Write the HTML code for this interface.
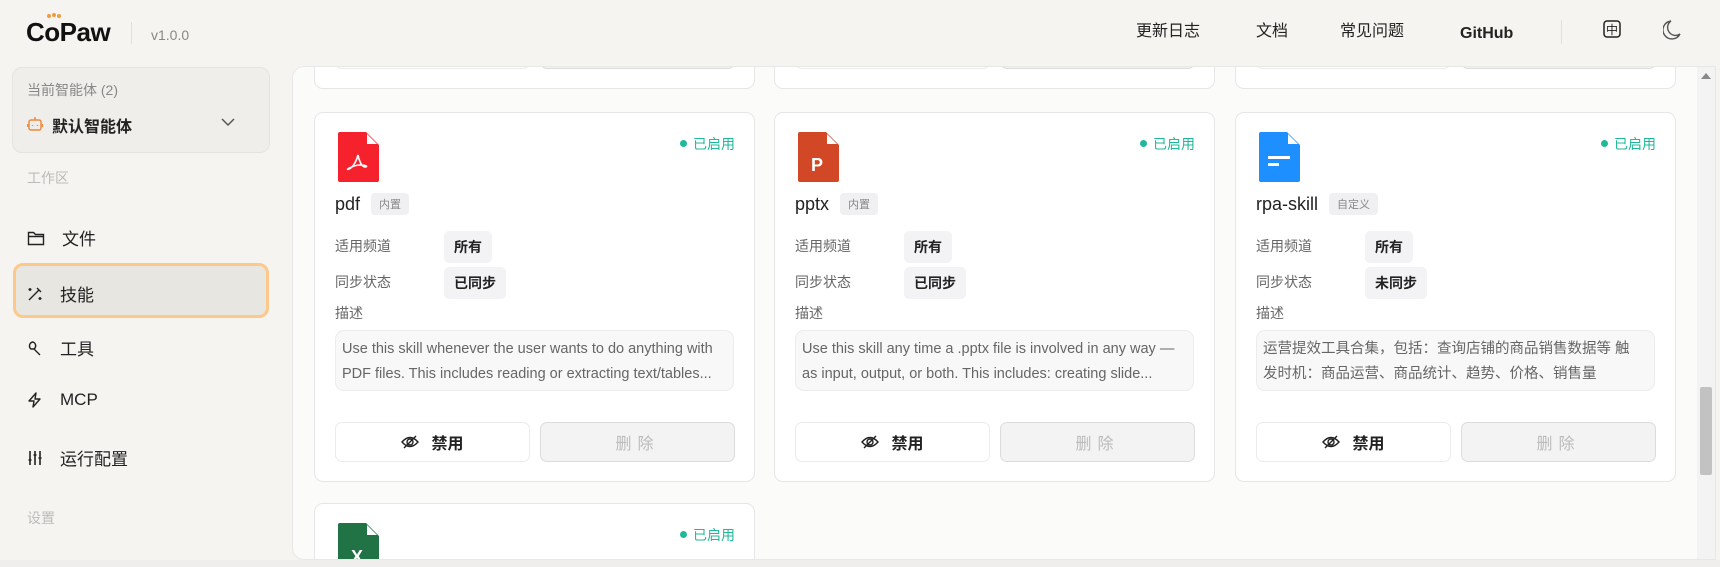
<!DOCTYPE html>
<html><head><meta charset="utf-8"><style>
*{box-sizing:border-box;margin:0;padding:0}
body{width:1720px;height:567px;overflow:hidden;background:#f6f4f0;font-family:"Liberation Sans","Noto Sans CJK SC",sans-serif;color:#222;position:relative}
.abs{position:absolute}
.logo{left:26px;top:17px;font-size:26px;font-weight:bold;letter-spacing:-0.5px;color:#111}
.nav{top:20px;font-size:16px;line-height:24px;height:24px;color:#222}
.agent{left:12px;top:67px;width:258px;height:86px;border:1px solid #e6e3de;border-radius:10px;background:#f0eeea}
.menu{left:27px;font-size:17px;color:#222;display:flex;align-items:center}
.menu svg{margin-right:17px}
.sec{left:27px;font-size:14px;color:#bbb}
.panel{left:292px;top:66px;width:1424px;height:494px;background:#fbfbfa;border:1px solid #e8e8e8;border-radius:12px 0 0 12px;overflow:hidden}
.card{position:absolute;width:441px;height:370px;background:#fff;border:1px solid #e6e6e6;border-radius:9px}
.card .ic{position:absolute;left:23px;top:19px}
.st{position:absolute;right:19px;top:21px;font-size:14px;color:#1fb89a}
.st:before{content:"";display:inline-block;width:7px;height:7px;border-radius:50%;background:#1fb89a;margin-right:6px;vertical-align:2px}
.tt{position:absolute;left:20px;top:80px;font-size:18px;color:#222;display:flex;align-items:center}
.bd{font-size:11px;color:#888;background:#f0f0f2;border-radius:4px;padding:3px 8px;margin-left:11px}
.lb{position:absolute;left:20px;font-size:14px;color:#666}
.vl{position:absolute;left:129px;font-size:14px;font-weight:bold;background:#f3f3f5;border-radius:5px;padding:6px 10px;color:#222}
.ds{position:absolute;left:20px;top:217px;width:399px;height:61px;background:#f8f8f8;border:1px solid #ececec;border-radius:9px;padding:6px 6px;font-size:14.5px;line-height:25px;color:#666;overflow:hidden}
.b1,.b2{position:absolute;top:309px;height:40px;width:195px;border-radius:7px;font-size:16px;display:flex;align-items:center;justify-content:center}
.b1{left:20px;border:1px solid #ebebeb;background:#fff;color:#222;font-weight:bold}
.b2{left:225px;border:1px solid #dcdcdc;background:#f3f3f3;color:#bbb;letter-spacing:6px}
</style></head><body>
<div class="abs logo">CoPaw</div>
<div class="abs" style="left:47px;top:13px;width:14px;height:5px"><span style="position:absolute;left:0;top:1px;width:4px;height:4px;border-radius:50%;background:#f29a3f"></span><span style="position:absolute;left:5px;top:0;width:4px;height:4px;border-radius:50%;background:#f29a3f"></span><span style="position:absolute;left:10px;top:1px;width:4px;height:4px;border-radius:50%;background:#f29a3f"></span></div>
<div class="abs" style="left:131px;top:22px;width:1px;height:22px;background:#e2e0dc"></div>
<div class="abs" style="left:151px;top:27px;font-size:14px;color:#888">v1.0.0</div>
<div class="abs nav" style="left:1136px">更新日志</div>
<div class="abs nav" style="left:1256px">文档</div>
<div class="abs nav" style="left:1340px">常见问题</div>
<div class="abs nav" style="left:1460px;top:22px;font-weight:bold">GitHub</div>
<div class="abs" style="left:1561px;top:20px;width:1px;height:24px;background:#e2e0dc"></div>
<svg class="abs" style="left:1602px;top:19px" width="20" height="20" viewBox="0 0 20 20"><rect x="2" y="2" width="16" height="16" rx="3" fill="none" stroke="#222" stroke-width="1.5"/><text x="10" y="15" font-size="12" text-anchor="middle" font-family="Noto Sans CJK SC" fill="#222">中</text></svg>
<svg class="abs" style="left:1663px;top:19px" width="20" height="22" viewBox="0 0 20 22"><path d="M8 2 A9 9 0 1 0 17 15 A7 7 0 0 1 8 2Z" fill="none" stroke="#555" stroke-width="1.4"/></svg>

<div class="abs agent"></div>
<div class="abs" style="left:27px;top:80px;font-size:14px;color:#888">当前智能体 (2)</div>
<svg class="abs" style="left:27px;top:116px" width="16" height="16" viewBox="0 0 16 16"><rect x="2" y="4" width="12" height="10" rx="2" fill="none" stroke="#f0893a" stroke-width="1.5"/><path d="M8 1v3M5.5 9v1M10.5 9v1M0.5 8v3M15.5 8v3" stroke="#f0893a" stroke-width="1.5"/></svg>
<div class="abs" style="left:52px;top:113px;font-size:16px;font-weight:bold">默认智能体</div>
<svg class="abs" style="left:220px;top:117px" width="16" height="10" viewBox="0 0 16 10"><path d="M2 2l6 6 6-6" fill="none" stroke="#555" stroke-width="1.5"/></svg>
<div class="abs sec" style="top:168px">工作区</div>
<div class="abs menu" style="top:225px"><svg width="18" height="16" viewBox="0 0 18 16"><path d="M1.5 2.5h5l2 2h8v10h-15z M1.5 6.5h15" fill="none" stroke="#222" stroke-width="1.4"/></svg>文件</div>
<div class="abs" style="left:13px;top:263px;width:256px;height:55px;border:3px solid #fdc98a;border-radius:10px;background:#e8e6e1"></div>
<div class="abs menu" style="top:281px"><svg width="16" height="16" viewBox="0 0 16 16"><path d="M2 14L12 4M10 2l4 4M3 2v3M1.5 3.5h3M13 11v3M11.5 12.5h3" fill="none" stroke="#222" stroke-width="1.4"/></svg>技能</div>
<div class="abs menu" style="top:335px"><svg width="16" height="16" viewBox="0 0 16 16"><path d="M6 2a4 4 0 0 0-3 6l1 1 3 0 1-1a4 4 0 0 0-2-6zM7 9l6 6" fill="none" stroke="#222" stroke-width="1.4"/></svg>工具</div>
<div class="abs menu" style="top:390px"><svg width="16" height="16" viewBox="0 0 16 16"><path d="M9 1L2 9h5l-1 6 7-8H8z" fill="none" stroke="#222" stroke-width="1.4" stroke-linejoin="round"/></svg>MCP</div>
<div class="abs menu" style="top:445px"><svg width="16" height="16" viewBox="0 0 16 16"><path d="M3 1v14M8 1v14M13 1v14M1.5 10h3M6.5 5h3M11.5 8h3" fill="none" stroke="#222" stroke-width="1.6"/></svg>运行配置</div>
<div class="abs sec" style="top:508px">设置</div>
<div class="abs" style="left:0;top:560px;width:1720px;height:7px;background:#efeeec"></div>

<div class="abs panel">
 <div class="card" style="left:21px;top:-348px"><div class="b1">禁用</div><div class="b2">删除</div></div>
 <div class="card" style="left:481px;top:-348px"><div class="b1">禁用</div><div class="b2">删除</div></div>
 <div class="card" style="left:942px;top:-348px"><div class="b1">禁用</div><div class="b2">删除</div></div>

 <div class="card" style="left:21px;top:45px">
  <svg class="ic" width="41" height="50" viewBox="0 0 41 50"><path d="M2 0H28L41 13V48Q41 50 39 50H2Q0 50 0 48V2Q0 0 2 0Z" fill="#f5222d"/><path d="M29 2L39 12H29Z" fill="#fff"/><path d="M20 23c-1 4-4 12-9 14s4-4 11-4 8 2 5 2-6-6-7-12z" fill="none" stroke="#fff" stroke-width="1.6"/></svg>
  <div class="st">已启用</div>
  <div class="tt">pdf<span class="bd">内置</span></div>
  <div class="lb" style="top:123px">适用频道</div><div class="vl" style="top:118px">所有</div>
  <div class="lb" style="top:159px">同步状态</div><div class="vl" style="top:154px">已同步</div>
  <div class="lb" style="top:190px">描述</div>
  <div class="ds">Use this skill whenever the user wants to do anything with PDF files. This includes reading or extracting text/tables...</div>
  <div class="b1"><svg width="18" height="16" viewBox="0 0 18 16" style="margin-right:12px"><path d="M1 8q8-9 16 0q-8 9-16 0z" fill="none" stroke="#222" stroke-width="1.4"/><circle cx="9" cy="8" r="3" fill="none" stroke="#222" stroke-width="1.4"/><path d="M3 14L15 2" stroke="#222" stroke-width="1.4"/></svg>禁用</div>
  <div class="b2">删除</div>
 </div>

 <div class="card" style="left:481px;top:45px">
  <svg class="ic" width="41" height="50" viewBox="0 0 41 50"><path d="M2 0H28L41 13V48Q41 50 39 50H2Q0 50 0 48V2Q0 0 2 0Z" fill="#d24726"/><path d="M29 2L39 12H29Z" fill="#fff"/><text x="19" y="39" font-size="18" font-weight="bold" text-anchor="middle" fill="#fff" font-family="Liberation Sans">P</text></svg>
  <div class="st">已启用</div>
  <div class="tt">pptx<span class="bd">内置</span></div>
  <div class="lb" style="top:123px">适用频道</div><div class="vl" style="top:118px">所有</div>
  <div class="lb" style="top:159px">同步状态</div><div class="vl" style="top:154px">已同步</div>
  <div class="lb" style="top:190px">描述</div>
  <div class="ds">Use this skill any time a .pptx file is involved in any way — as input, output, or both. This includes: creating slide...</div>
  <div class="b1"><svg width="18" height="16" viewBox="0 0 18 16" style="margin-right:12px"><path d="M1 8q8-9 16 0q-8 9-16 0z" fill="none" stroke="#222" stroke-width="1.4"/><circle cx="9" cy="8" r="3" fill="none" stroke="#222" stroke-width="1.4"/><path d="M3 14L15 2" stroke="#222" stroke-width="1.4"/></svg>禁用</div>
  <div class="b2">删除</div>
 </div>

 <div class="card" style="left:942px;top:45px">
  <svg class="ic" width="41" height="50" viewBox="0 0 41 50"><path d="M2 0H28L41 13V48Q41 50 39 50H2Q0 50 0 48V2Q0 0 2 0Z" fill="#1e8fff"/><path d="M29 2L39 12H29Z" fill="#fff"/><rect x="9" y="24" width="22" height="3" fill="#fff"/><rect x="9" y="31" width="11" height="3" fill="#fff"/></svg>
  <div class="st">已启用</div>
  <div class="tt">rpa-skill<span class="bd">自定义</span></div>
  <div class="lb" style="top:123px">适用频道</div><div class="vl" style="top:118px">所有</div>
  <div class="lb" style="top:159px">同步状态</div><div class="vl" style="top:154px">未同步</div>
  <div class="lb" style="top:190px">描述</div>
  <div class="ds">运营提效工具合集，包括：查询店铺的商品销售数据等&nbsp;触<br>发时机：商品运营、商品统计、趋势、价格、销售量</div>
  <div class="b1"><svg width="18" height="16" viewBox="0 0 18 16" style="margin-right:12px"><path d="M1 8q8-9 16 0q-8 9-16 0z" fill="none" stroke="#222" stroke-width="1.4"/><circle cx="9" cy="8" r="3" fill="none" stroke="#222" stroke-width="1.4"/><path d="M3 14L15 2" stroke="#222" stroke-width="1.4"/></svg>禁用</div>
  <div class="b2">删除</div>
 </div>

 <div class="card" style="left:21px;top:436px">
  <svg class="ic" width="41" height="50" viewBox="0 0 41 50"><path d="M2 0H28L41 13V48Q41 50 39 50H2Q0 50 0 48V2Q0 0 2 0Z" fill="#217346"/><path d="M29 2L39 12H29Z" fill="#fff"/><text x="19" y="40" font-size="18" font-weight="bold" text-anchor="middle" fill="#fff" font-family="Liberation Sans">X</text></svg>
  <div class="st">已启用</div>
 </div>

 <div style="position:absolute;left:1404px;top:0;width:18px;height:494px;background:#f3f3f3"></div>
 <div style="position:absolute;left:1408px;top:6px;width:0;height:0;border-left:5px solid transparent;border-right:5px solid transparent;border-bottom:6px solid #888"></div>
 <div style="position:absolute;left:1407px;top:320px;width:12px;height:88px;background:#c2c2c2;border-radius:2px"></div>
</div>
</body></html>
